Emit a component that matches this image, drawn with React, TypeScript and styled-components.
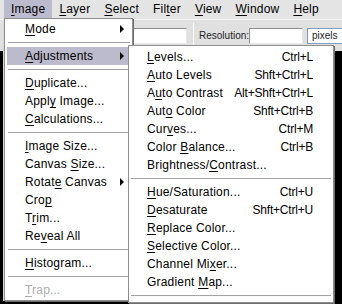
import React from 'react';
import styled, { createGlobalStyle } from 'styled-components';

const GlobalStyle = createGlobalStyle`
  html, body {
    margin: 0;
    padding: 0;
    overflow: hidden;
    background: #000;
  }
  body {
    font-family: "Liberation Sans", Arial, sans-serif;
    font-size: 12px;
    letter-spacing: 0.2px;
    color: #000;
  }
`;

const Screen = styled.div`
  position: relative;
  width: 342px;
  height: 304px;
  overflow: hidden;
  display: flex;
  flex-direction: column;
  background: #000;
`;

const MenuBar = styled.div`
  display: flex;
  height: 19px;
  padding-left: 4px;
  background: #e4e4e4;
`;

const BarItem = styled.div<{ $active?: boolean }>`
  padding: 0 7px;
  line-height: 19px;
  white-space: nowrap;
  background: ${(p) => (p.$active ? '#bcbacd' : 'transparent')};
`;

const OptionsBar = styled.div`
  display: flex;
  align-items: center;
  height: 31px;
  padding-left: 133px;
  border-top: 1px solid #f6f6f6;
  background: #e0e0e0;
  font-size: 10px;
  letter-spacing: 0;
`;

const Field = styled.div<{ $width: number }>`
  width: ${(p) => p.$width}px;
  height: 16px;
  box-sizing: border-box;
  background: #fff;
  border: 1px solid #8f8f8f;
  border-right-color: #e8e8e8;
  border-bottom-color: #e8e8e8;
  flex-shrink: 0;
`;

const Divider = styled.div`
  width: 1px;
  height: 26px;
  margin: 0 5px 0 6px;
  background: #a0a0a0;
  border-right: 1px solid #fff;
`;

const FieldLabel = styled.span`
  width: 46px;
  margin-right: 4px;
  white-space: nowrap;
  color: #222;
`;

const Select = styled.div`
  width: 60px;
  height: 16px;
  margin-left: 4px;
  box-sizing: border-box;
  flex-shrink: 0;
  background: #fff;
  border: 1px solid #7f9db9;
  padding-left: 4px;
  line-height: 14px;
  color: #222;
`;

const Workspace = styled.div`
  flex: 1;
  background: #000;
`;

const Menu = styled.div<{ $left: number; $top: number; $width: number }>`
  position: absolute;
  left: ${(p) => p.$left}px;
  top: ${(p) => p.$top}px;
  width: ${(p) => p.$width}px;
  box-sizing: border-box;
  background: #fff;
  border: 1px solid #8e8e8e;
  box-shadow: 1px 1px 0 #6c6c6c;
`;

const MainMenu = styled(Menu)`
  padding: 1px 1px 1px 2px;
  box-shadow: -1px 0 0 #d8d8d8, 1px 1px 0 #6c6c6c;
`;

const SubMenu = styled(Menu)`
  padding: 2px 1px;
`;

const Row = styled.div<{ $active?: boolean; $disabled?: boolean; $indent: number; $right: number }>`
  display: flex;
  align-items: center;
  height: 18px;
  padding: 0 ${(p) => p.$right}px 0 ${(p) => p.$indent}px;
  white-space: nowrap;
  background: ${(p) => (p.$active ? '#bcbacd' : 'transparent')};
  color: ${(p) => (p.$disabled ? '#adadad' : '#000')};
`;

const Label = styled.span`
  flex: 1;
  padding-right: 8px;
`;

const Shortcut = styled.span`
  text-align: right;
  letter-spacing: -0.2px;
`;

const Arrow = styled.span`
  width: 0;
  height: 0;
  border-top: 4px solid transparent;
  border-bottom: 4px solid transparent;
  border-left: 4px solid #000;
`;

const Separator = styled.div`
  height: 9px;
  display: flex;
  align-items: center;
  padding: 0 1px;
  &::after {
    content: '';
    flex: 1;
    height: 1px;
    background: #a2a2a2;
  }
`;

const Mnemonic = styled.u`
  text-decoration-thickness: 1px;
  text-underline-offset: 2px;
`;

function withMnemonic(text: string) {
  const i = text.indexOf('&');
  if (i < 0) return text;
  return (
    <>
      {text.slice(0, i)}
      <Mnemonic>{text[i + 1]}</Mnemonic>
      {text.slice(i + 2)}
    </>
  );
}

type Entry = { label?: string; shortcut?: string; sub?: boolean; active?: boolean; disabled?: boolean; sep?: boolean };

const bar = ['&Image', '&Layer', '&Select', 'Fil&ter', '&View', '&Window', '&Help'];

const imageMenu: Entry[] = [
  { label: '&Mode', sub: true },
  { sep: true },
  { label: '&Adjustments', sub: true, active: true },
  { sep: true },
  { label: '&Duplicate...' },
  { label: 'Appl&y Image...' },
  { label: '&Calculations...' },
  { sep: true },
  { label: '&Image Size...' },
  { label: 'Canvas &Size...' },
  { label: 'Rotat&e Canvas', sub: true },
  { label: 'Cro&p' },
  { label: 'T&rim...' },
  { label: 'Re&veal All' },
  { sep: true },
  { label: '&Histogram...' },
  { sep: true },
  { label: '&Trap...', disabled: true },
];

const adjustments: Entry[] = [
  { label: '&Levels...', shortcut: 'Ctrl+L' },
  { label: '&Auto Levels', shortcut: 'Shft+Ctrl+L' },
  { label: 'A&uto Contrast', shortcut: 'Alt+Shft+Ctrl+L' },
  { label: 'Aut&o Color', shortcut: 'Shft+Ctrl+B' },
  { label: 'Cur&ves...', shortcut: 'Ctrl+M' },
  { label: 'Color &Balance...', shortcut: 'Ctrl+B' },
  { label: 'Brightness/&Contrast...' },
  { sep: true },
  { label: '&Hue/Saturation...', shortcut: 'Ctrl+U' },
  { label: '&Desaturate', shortcut: 'Shft+Ctrl+U' },
  { label: '&Replace Color...' },
  { label: '&Selective Color...' },
  { label: 'Channel Mi&xer...' },
  { label: 'Gradient &Map...' },
  { sep: true },
];

function renderEntries(list: Entry[], indent: number, right: number) {
  return list.map((e, i) =>
    e.sep ? (
      <Separator key={i} />
    ) : (
      <Row key={i} $active={e.active} $disabled={e.disabled} $indent={indent} $right={right}>
        <Label>{withMnemonic(e.label || '')}</Label>
        {e.shortcut && <Shortcut>{e.shortcut}</Shortcut>}
        {e.sub && <Arrow />}
      </Row>
    )
  );
}

export default function App() {
  return (
    <Screen>
      <GlobalStyle />
      <MenuBar>
        {bar.map((b, i) => (
          <BarItem key={b} $active={i === 0}>
            {withMnemonic(b)}
          </BarItem>
        ))}
      </MenuBar>
      <OptionsBar>
        <Field $width={54} />
        <Divider />
        <FieldLabel>Resolution:</FieldLabel>
        <Field $width={54} />
        <Select>pixels</Select>
      </OptionsBar>
      <Workspace />

      <MainMenu $left={4} $top={18} $width={129}>
        {renderEntries(imageMenu, 18, 7)}
      </MainMenu>
      <SubMenu $left={128} $top={45} $width={206}>
        {renderEntries(adjustments, 17, 19)}
      </SubMenu>
    </Screen>
  );
}
